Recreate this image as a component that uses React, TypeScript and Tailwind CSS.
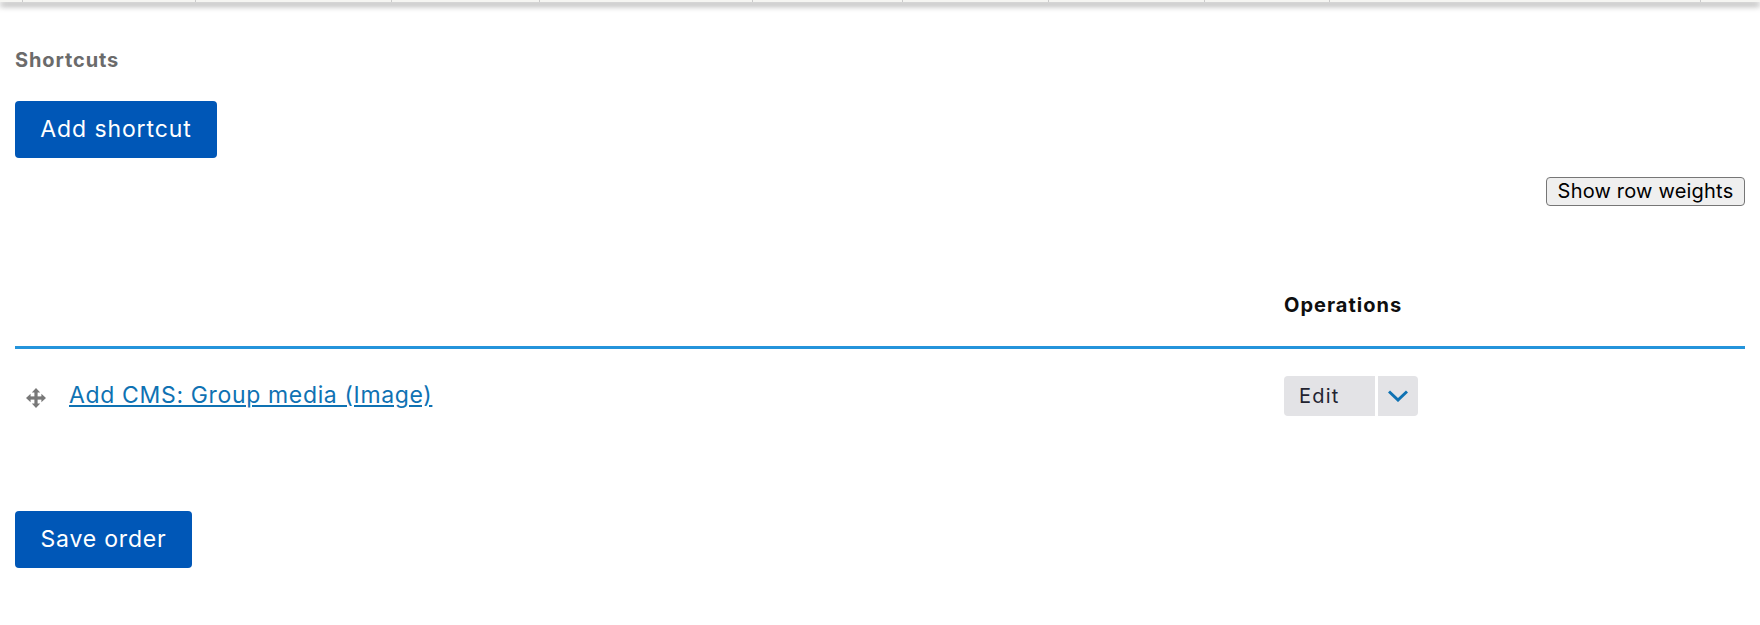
const tickStops = [22, 195, 391, 539, 752, 902, 1048, 1204, 1329, 1700];

function DragIcon() {
  return (
    <svg width="20" height="20" viewBox="0 0 20 20" className="text-[#787878]" fill="currentColor">
      <rect x="8.4" y="3" width="3.2" height="14" />
      <rect x="3" y="8.4" width="14" height="3.2" />
      <path d="M10 0l4.2 4.6H5.8zM10 20l-4.2-4.6h8.4zM0 10l4.6-4.2v8.4zM20 10l-4.6 4.2V5.8z" />
    </svg>
  );
}

export default function App() {
  return (
    <div className="bg-white h-[625px] overflow-hidden font-['Inter',sans-serif] text-[#222330]">
      <div className="relative h-[2px] bg-[#f5f5f2] shadow-[0_3px_6px_rgba(0,0,0,0.75)]">
        {tickStops.map((x) => (
          <span key={x} className="absolute top-0 h-[2px] w-px bg-[#cccccc]" style={{ left: x }} />
        ))}
      </div>

      <div className="px-[15px]">
        <h2 className="mt-[46px] text-[20px] leading-[24px] font-bold tracking-[0.9px] text-[#6b6b6b]">Shortcuts</h2>

        <button className="mt-[29px] h-[57px] w-[202px] rounded-[4px] bg-[#0057b7] text-[23px] tracking-[0.9px] text-white">
          Add shortcut
        </button>

        <div className="mt-[19px] flex justify-end">
          <button className="h-[29px] w-[199px] rounded-[4px] border border-[#767676] bg-[#efefef] pb-[2px] text-[20px] leading-none tracking-[0.2px] text-black">
            Show row weights
          </button>
        </div>

        <table className="mt-[75px] w-full border-collapse">
          <thead>
            <tr className="border-b-[3px] border-[#2494db]">
              <th className="h-[66px] pb-[16px]"></th>
              <th className="h-[66px] w-[461px] pb-[16px] text-left text-[20px] font-bold tracking-[1px] text-[#0f0f0f]">Operations</th>
            </tr>
          </thead>
          <tbody>
            <tr>
              <td className="h-[93px] align-top pt-[27px]">
                <div className="flex items-start">
                  <span className="ml-[11px] mt-[12px]"><DragIcon /></span>
                  <a href="#" className="ml-[23px] mt-[5px] text-[23px] leading-[28px] tracking-[0.65px] text-[#0f72b3] underline">
                    Add CMS: Group media (Image)
                  </a>
                </div>
              </td>
              <td className="align-top pt-[27px]">
                <div className="flex gap-[3px]">
                  <span className="flex h-[40px] w-[91px] items-center rounded-l-[4px] bg-[#e3e3e6] pl-[15px] text-[20px] tracking-[1.2px]">Edit</span>
                  <span className="flex h-[40px] w-[40px] items-center justify-center rounded-r-[4px] bg-[#e3e3e6]">
                    <svg width="20" height="12" viewBox="0 0 20 12" fill="none" stroke="#0f72b3" strokeWidth="3">
                      <path d="M1 1.5l9 8.5 9-8.5" />
                    </svg>
                  </span>
                </div>
              </td>
            </tr>
          </tbody>
        </table>

        <button className="mt-[71px] h-[57px] w-[177px] rounded-[4px] bg-[#0057b7] text-[23px] tracking-[0.8px] text-white">
          Save order
        </button>
      </div>
    </div>
  );
}
